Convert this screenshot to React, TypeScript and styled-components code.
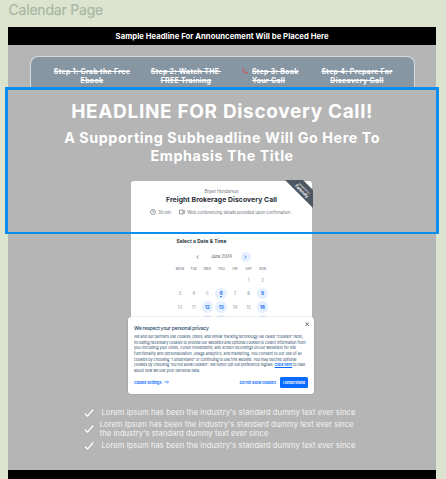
import React from "react";
import styled, { createGlobalStyle } from "styled-components";

const GlobalStyle = createGlobalStyle`
  * { box-sizing: border-box; }
  body { margin: 0; background: #dce4d0; font-family: Inter, sans-serif; overflow: hidden; }
`;

const Canvas = styled.div`
  height: 479px;
  padding: 0 9.7px 0 8px;
  overflow: hidden;
  background: #dce4d0;
`;

const FrameLabel = styled.div`
  height: 26.5px;
  padding-left: 0.5px;
  line-height: 20px;
  font-size: 14px;
  font-weight: 400;
  letter-spacing: -0.2px;
  color: #abb7a0;
  -webkit-text-stroke: 0.2px #abb7a0;
`;

const Frame = styled.main`
  position: relative;
  display: flex;
  flex-direction: column;
  height: 452.5px;
  background: #b5b5b5;
`;

const Announcement = styled.header`
  height: 18px;
  padding-top: 1.2px;
  line-height: 18px;
  text-align: center;
  background: #000;
  color: #fff;
  font-size: 7.7px;
  font-weight: 700;
  letter-spacing: 0.04px;
`;

const Steps = styled.nav`
  display: grid;
  grid-template-columns: 80px 80px 62px 82px;
  column-gap: 14px;
  height: 33.5px;
  margin: 11.5px 21px 0 22px;
  padding: 11px 0 0 21px;
  border: 1px solid #d5dade;
  border-bottom: 0;
  border-radius: 8px 8px 0 0;
  background: #8796a3;
`;

const Step = styled.div<{ $start?: boolean }>`
  display: flex;
  justify-content: ${(p) => (p.$start ? "flex-start" : "center")};
  gap: 4px;
  text-align: ${(p) => (p.$start ? "left" : "center")};
  padding-left: ${(p) => (p.$start ? "2px" : "0")};
  color: #fff;
  font-size: 7px;
  font-weight: 700;
  line-height: 8.7px;
  letter-spacing: 0.29px;
  white-space: pre;
`;

const Struck = styled.span`
  text-decoration: line-through;
  text-decoration-thickness: 0.8px;
`;

const Hero = styled.section`
  height: 91.5px;
  padding-top: 10.5px;
  text-align: center;
  color: #fff;
`;

const Headline = styled.h1`
  margin: 0;
  font-size: 19px;
  line-height: 23px;
  font-weight: 700;
  letter-spacing: 0.67px;
`;

const Subheadline = styled.h2`
  margin: 6.3px 0 0;
  font-size: 14.3px;
  line-height: 17.8px;
  font-weight: 700;
  letter-spacing: 0.58px;
`;

const Booking = styled.section`
  position: relative;
  width: 181px;
  height: 136px;
  margin-left: 123px;
  border-radius: 3px 3px 0 0;
  background: #fff;
  color: #2c3540;
`;

const Ribbon = styled.svg`
  position: absolute;
  top: -1.5px;
  right: -1px;
  width: 28px;
  height: 28px;
`;

const Host = styled.div`
  padding-top: 8px;
  height: 13.6px;
  line-height: 6px;
  text-align: center;
  font-size: 4.4px;
  letter-spacing: -0.15px;
  color: #6b737b;
`;

const EventName = styled.div`
  height: 10px;
  line-height: 10px;
  text-align: center;
  font-size: 6.8px;
  font-weight: 700;
  letter-spacing: 0.08px;
  color: #252c35;
`;

const Meta = styled.div`
  display: flex;
  align-items: center;
  height: 15.4px;
  padding-left: 19px;
  font-size: 4.2px;
  letter-spacing: -0.065px;
  color: #6b737b;
  svg { flex: none; margin-right: 2px; }
  span + svg { margin-left: 8px; }
`;

const PickerTitle = styled.div`
  margin-top: 17px;
  padding-left: 45.5px;
  height: 9px;
  line-height: 9px;
  font-size: 4.8px;
  font-weight: 700;
  letter-spacing: 0.1px;
  color: #252c35;
`;

const Month = styled.div`
  display: flex;
  align-items: center;
  height: 10px;
  margin-top: 6px;
  padding-left: 64.5px;
  font-size: 4.4px;
  letter-spacing: -0.2px;
  color: #4e5761;
`;

const MonthName = styled.span`
  width: 23px;
  margin: 0 6.5px 0 12.5px;
`;

const NextMonth = styled.span`
  display: flex;
  align-items: center;
  justify-content: center;
  width: 10px;
  height: 10px;
  border-radius: 50%;
  background: #e7f0ff;
`;

const Days = styled.div`
  display: grid;
  grid-template-columns: repeat(7, 13.78px);
  grid-template-rows: 9px 12.5px repeat(3, 13.8px);
  height: 54.5px;
  overflow: hidden;
  margin: 3px 0 0 42px;
  place-items: center;
`;

const Weekday = styled.span`
  font-size: 3.4px;
  letter-spacing: -0.05px;
  color: #59616a;
`;

const Day = styled.span<{ $open?: boolean; $today?: boolean }>`
  display: flex;
  align-items: center;
  justify-content: center;
  position: relative;
  width: 11.6px;
  height: 11.6px;
  border-radius: 50%;
  font-size: 4.4px;
  font-weight: ${(p) => (p.$open ? 800 : 400)};
  color: ${(p) => (p.$open ? "#2377f5" : "#8b9299")};
  background: ${(p) => (p.$open ? "#e7f0ff" : "transparent")};
  &::after {
    content: "";
    display: ${(p) => (p.$today ? "block" : "none")};
    position: absolute;
    bottom: 2px;
    width: 1.5px;
    height: 1.5px;
    border-radius: 50%;
    background: #2377f5;
  }
`;

const Consent = styled.section`
  position: relative;
  width: 186px;
  height: 77px;
  margin-left: 120px;
  padding: 8px 6px 0;
  border-radius: 3px;
  background: #fff;
  box-shadow: 0 0 2px rgba(0, 0, 0, 0.2);
  color: #2a4869;
`;

const Close = styled.svg`
  position: absolute;
  top: 5px;
  right: 5px;
  width: 4.5px;
  height: 4.5px;
`;

const ConsentTitle = styled.div`
  height: 9px;
  line-height: 7px;
  font-size: 5.2px;
  font-weight: 500;
  letter-spacing: -0.27px;
`;

const ConsentLine = styled.div<{ $track?: number }>`
  height: 5.65px;
  line-height: 5.65px;
  font-size: 3.7px;
  font-weight: 400;
  letter-spacing: ${(p) => p.$track ?? -0.035}px;
  white-space: nowrap;
`;

const InlineLink = styled.span`
  color: #086bff;
  font-weight: 700;
  text-decoration: underline;
  text-decoration-thickness: 0.5px;
`;

const Actions = styled.div`
  display: flex;
  align-items: center;
  height: 12px;
  margin-top: 3px;
  color: #086bff;
  font-size: 3.8px;
  font-weight: 600;
  letter-spacing: -0.07px;
  white-space: nowrap;
  svg { margin-left: 3px; }
`;

const Decline = styled.span`
  margin-left: auto;
`;

const Accept = styled.span`
  width: 28px;
  height: 11.5px;
  margin-left: 4px;
  line-height: 11.5px;
  text-align: center;
  border-radius: 1.5px;
  background: #086bff;
  color: #fff;
  letter-spacing: -0.09px;
`;

const Benefits = styled.ul`
  list-style: none;
  margin: 14.9px 0 0 76px;
  padding: 0;
  color: #f4f4f4;
  font-size: 7.6px;
  font-weight: 400;
  line-height: 8.7px;
  letter-spacing: 0.06px;
  white-space: nowrap;
`;

const Benefit = styled.li<{ $wrapped?: boolean }>`
  display: flex;
  align-items: center;
  height: ${(p) => (p.$wrapped ? "24.2px" : "8.7px")};
  gap: ${(p) => (p.$wrapped ? "5.7px" : "7.5px")};
`;

const Footer = styled.footer`
  margin-top: auto;
  height: 9.3px;
  background: #000;
`;

const Selection = styled.div`
  position: absolute;
  left: -3px;
  top: 60.5px;
  width: 434px;
  height: 147px;
  border: 3px solid #0d8df0;
  border-bottom-width: 2.5px;
`;

const Check = () => (
  <svg width="10" height="9" viewBox="0 0 10 9" fill="none" stroke="#fff" strokeWidth="1.3">
    <path d="M1 4.7 3.6 7.1 9.2.5" />
  </svg>
);

const Phone = () => (
  <svg width="6" height="6" viewBox="0 0 6 6" fill="#c45d66">
    <path d="M.4.5 1.6.2 2.5 1.7 1.9 2.4C2.2 3.2 2.8 3.8 3.6 4.1L4.3 3.5 5.8 4.4 5.5 5.6C2.6 6.3-.2 3.5.4.5Z" />
  </svg>
);

const weekdays = ["MON", "TUE", "WED", "THU", "FRI", "SAT", "SUN"];
const dates = Array.from({ length: 28 }, (_, i) => i - 4);
const openDates = [6, 9, 12, 13, 16, 19, 20, 23];
const lastLabelled = 16;

const sentence = "Lorem Ipsum has been the industry's standard dummy text ever since";

const App = () => (
  <>
    <GlobalStyle />
    <Canvas>
      <FrameLabel>Calendar Page</FrameLabel>
      <Frame>
        <Announcement>Sample Headline For Announcement Will be Placed Here</Announcement>
        <Steps>
          <Step><Struck>{"Step 1: Grab the Free\nEbook"}</Struck></Step>
          <Step><Struck>{"Step 2: Watch THE \nFREE Training"}</Struck></Step>
          <Step $start>
            <Phone />
            <Struck>{"Step 3: Book\nYour Call"}</Struck>
          </Step>
          <Step><Struck>{"Step 4: Prepare For\nDiscovery Call"}</Struck></Step>
        </Steps>
        <Hero>
          <Headline>HEADLINE FOR Discovery Call!</Headline>
          <Subheadline>
            A Supporting Subheadline Will Go Here To
            <br />
            Emphasis The Title
          </Subheadline>
        </Hero>
        <Booking>
          <Host>Bryan Henderson</Host>
          <EventName>Freight Brokerage Discovery Call</EventName>
          <Meta>
            <svg width="6" height="6" viewBox="0 0 6 6" fill="none" stroke="#59616a" strokeWidth=".6">
              <circle cx="3" cy="3" r="2.5" />
              <path d="M3 1.3V3.1H4.3" />
            </svg>
            <span>30 min</span>
            <svg width="6" height="6" viewBox="0 0 6 6" fill="none" stroke="#59616a" strokeWidth=".6">
              <path d="M.5 1H4V5H.5ZM4 2.3 5.6 1.6V4.4L4 3.7" />
            </svg>
            <span>Web conferencing details provided upon confirmation.</span>
          </Meta>
          <PickerTitle>Select a Date &amp; Time</PickerTitle>
          <Month>
            <svg width="3" height="4" viewBox="0 0 3 4" fill="none" stroke="#59616a" strokeWidth=".7">
              <path d="M2.3.4.8 2 2.3 3.6" />
            </svg>
            <MonthName>June 2024</MonthName>
            <NextMonth>
              <svg width="3" height="4" viewBox="0 0 3 4" fill="none" stroke="#2377f5" strokeWidth=".8">
                <path d="M.7.4 2.2 2 .7 3.6" />
              </svg>
            </NextMonth>
          </Month>
          <Days>
            {weekdays.map((d) => <Weekday key={d}>{d}</Weekday>)}
            {dates.map((d) => (
              <Day key={d} $open={openDates.includes(d)} $today={d === 6}>
                {d > 0 && d <= lastLabelled ? d : ""}
              </Day>
            ))}
          </Days>
          <Ribbon viewBox="0 0 28 28">
            <path d="M0 0H18L28 10V28Z" fill="#4c5761" />
            <g fill="#fff" fontFamily="Inter, sans-serif" textAnchor="middle" transform="translate(18 10) rotate(45)">
              <text y="-1.1" fontSize="2.7">powered by</text>
              <text y="3" fontSize="4" fontWeight="700">Calendly</text>
            </g>
          </Ribbon>
        </Booking>
        <Consent>
          <Close viewBox="0 0 5 5" stroke="#333" strokeWidth=".8">
            <path d="M.6.6 4.4 4.4M4.4.6.6 4.4" />
          </Close>
          <ConsentTitle>We respect your personal privacy</ConsentTitle>
          <ConsentLine>We and our partners use cookies, pixels, and similar tracking technology (all called “cookies” here),</ConsentLine>
          <ConsentLine $track={-0.04}>including necessary cookies to provide our websites and optional cookies to collect information from</ConsentLine>
          <ConsentLine $track={-0.015}>you (including your clicks, cursor movements, and screen recordings on our websites) for site</ConsentLine>
          <ConsentLine $track={0.03}>functionality and personalization, usage analytics, and marketing. You consent to our use of all</ConsentLine>
          <ConsentLine $track={-0.03}>cookies by choosing “I understand” or continuing to use this website. You may decline optional</ConsentLine>
          <ConsentLine $track={-0.045}>
            cookies by choosing “Do not allow cookies”. We honor opt-out preference signals. <InlineLink>Click here</InlineLink> to read
          </ConsentLine>
          <ConsentLine $track={-0.01}>about how we use your personal data.</ConsentLine>
          <Actions>
            Cookie settings
            <svg width="5" height="4" viewBox="0 0 5 4" fill="none" stroke="#086bff" strokeWidth=".6">
              <path d="M0 2H4.5M3 .5 4.5 2 3 3.5" />
            </svg>
            <Decline>Do not allow cookies</Decline>
            <Accept>I understand</Accept>
          </Actions>
        </Consent>
        <Benefits>
          <Benefit><Check />{sentence}</Benefit>
          <Benefit $wrapped>
            <Check />
            <span>{sentence}<br />the industry's standard dummy text ever since</span>
          </Benefit>
          <Benefit><Check />{sentence}</Benefit>
        </Benefits>
        <Footer />
        <Selection />
      </Frame>
    </Canvas>
  </>
);

export default App;
